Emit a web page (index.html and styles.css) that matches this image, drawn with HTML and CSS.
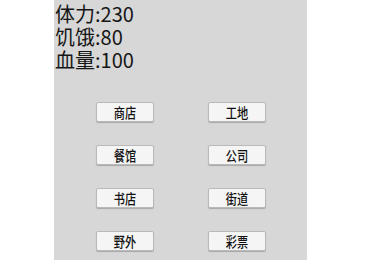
FILE: index.html
```html
<!DOCTYPE html>
<html>
<head>
    <meta charset="utf-8">
    <link rel="stylesheet" href="styles.css">
</head>
<body>
<div class="screen">
    <div class="panel">
        <div class="stats">
            <div class="stat">体力:230</div>
            <div class="stat">饥饿:80</div>
            <div class="stat">血量:100</div>
        </div>

        <div class="actions">
            <button class="action-button"><span>商店</span></button>
            <button class="action-button"><span>工地</span></button>
            <button class="action-button"><span>餐馆</span></button>
            <button class="action-button"><span>公司</span></button>
            <button class="action-button"><span>书店</span></button>
            <button class="action-button"><span>街道</span></button>
            <button class="action-button"><span>野外</span></button>
            <button class="action-button"><span>彩票</span></button>
        </div>
    </div>
</div>
</body>
</html>
```

FILE: styles.css
```css
/* Page frame */
body {
    margin: 0;
    background: #ffffff;
    font-family: "Noto Sans CJK SC", "Liberation Sans", sans-serif;
}

.screen {
    display: flex;
    height: 260px;
    overflow: hidden;
}

/* Grey game panel */
.panel {
    margin-left: 54px;
    width: 253px;
    height: 260px;
    background-color: #d7d7d7;
    overflow: hidden;
}

/* Player stats */
.stats {
    padding-top: 2px;
    padding-left: 1px;
}

.stat {
    font-size: 20px;
    line-height: 23px;
    color: #161616;
}

/* Action buttons */
.actions {
    display: grid;
    grid-template-columns: 58px 58px;
    column-gap: 54px;
    row-gap: 23px;
    margin-top: 31px;
    padding-left: 42px;
}

.action-button {
    height: 20px;
    padding: 0;
    background-color: #f5f5f5;
    border: 1px solid #b9b9b9;
    border-radius: 2px;
    box-shadow: 0 1px 1px #a8a8a8;
    font-family: "Noto Sans CJK SC", sans-serif;
    font-size: 14px;
    font-weight: 500;
    line-height: 18px;
    color: #111111;
}

.action-button span {
    display: inline-block;
    transform: scaleX(0.8);
}
```
